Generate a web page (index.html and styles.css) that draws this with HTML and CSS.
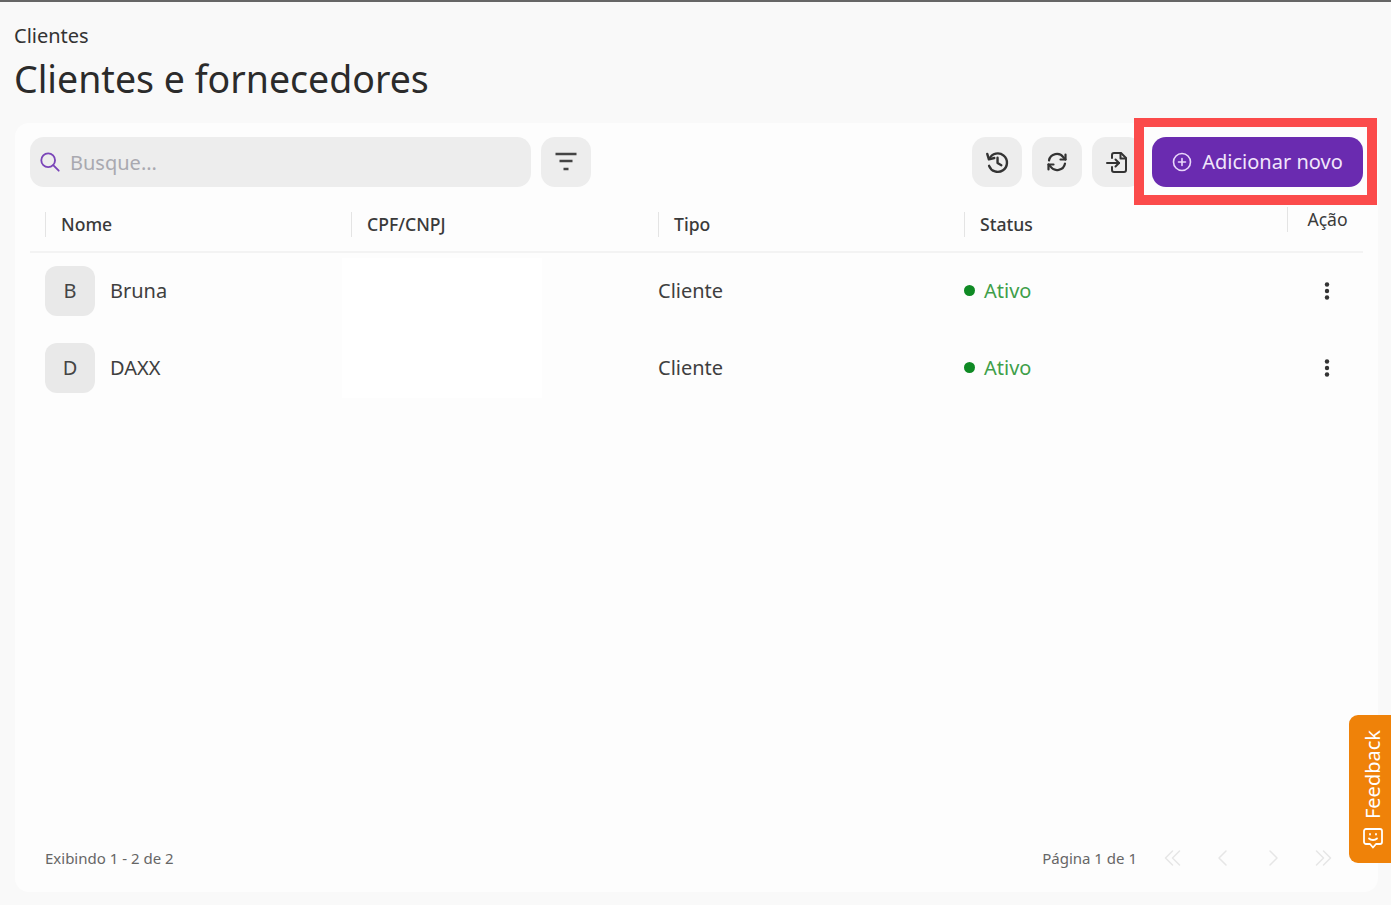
FILE: index.html
```html
<!DOCTYPE html>
<html lang="pt-BR">
<head>
<meta charset="utf-8">
<title>Clientes e fornecedores</title>
<link rel="stylesheet" href="styles.css">
</head>
<body>
<main class="page">
  <div class="crumb">Clientes</div>
  <h1 class="title">Clientes e fornecedores</h1>
  <section class="card">
    <div class="toolbar">
      <label class="search">
        <svg class="search-icon" viewBox="0 0 24 24" width="22" height="22" fill="none" stroke="#7a45b8" stroke-width="2" stroke-linecap="round"><circle cx="10" cy="10" r="7.500"/><path d="M15.500 15.500l6 6"/></svg>
        <span class="placeholder">Busque...</span>
      </label>
      <button class="icon-btn" aria-label="Filtrar">
        <svg viewBox="0 0 24 24" width="24" height="24" fill="none" stroke="#444" stroke-width="2.400"><path d="M1.500 4h21M5.500 11h13M9.500 19h5"/></svg>
      </button>
      <div class="spacer"></div>
      <button class="icon-btn" aria-label="Histórico">
        <svg viewBox="0 0 24 24" width="26" height="26" fill="none" stroke="#333" stroke-width="2.200" stroke-linecap="round" stroke-linejoin="round"><path d="M3 4.500l1.500 5 5-1.200"/><path d="M5 9a8.500 8.500 0 1 1-.3 6.500"/><path d="M12.500 8v5l3.500 2"/></svg>
      </button>
      <button class="icon-btn" aria-label="Atualizar">
        <svg viewBox="0 0 24 24" width="24" height="24" fill="none" stroke="#333" stroke-width="2.200" stroke-linecap="round" stroke-linejoin="round"><path d="M4 10.500A8 8 0 0 1 18.500 7.500L20.500 9.500"/><path d="M20.500 4.500v5h-5"/><path d="M20 13.500A8 8 0 0 1 5.500 16.500L3.500 14.500"/><path d="M3.500 19.500v-5h5"/></svg>
      </button>
      <button class="icon-btn" aria-label="Importar">
        <svg viewBox="0 0 24 24" width="24" height="24" fill="none" stroke="#333" stroke-width="2" stroke-linecap="round" stroke-linejoin="round"><path d="M7 8V5a2 2 0 0 1 2-2h7l5 5v12a2 2 0 0 1-2 2H9a2 2 0 0 1-2-2v-3"/><path d="M15.500 3v5.500H21"/><path d="M2 13h12"/><path d="M10.500 9.500L14 13l-3.500 3.500"/></svg>
      </button>
      <button class="primary">
        <svg viewBox="0 0 20 20" width="20" height="20" fill="none" stroke="#e9d8fa" stroke-width="1.600" stroke-linecap="round"><circle cx="10" cy="10" r="8.500"/><path d="M10 6.500v7M6.500 10h7"/></svg>
        <span class="primary-label">Adicionar novo</span>
      </button>
    </div>

    <div class="table">
      <div class="head">
        <div class="th">Nome</div>
        <div class="th">CPF/CNPJ</div>
        <div class="th">Tipo</div>
        <div class="th">Status</div>
        <div class="th th-action">Ação</div>
      </div>
      <div class="row">
        <div class="cell name"><span class="avatar">B</span>Bruna</div>
        <div class="cell"></div>
        <div class="cell">Cliente</div>
        <div class="cell status"><i class="dot"></i>Ativo</div>
        <div class="cell action"><svg viewBox="0 0 6 20" width="6" height="20" fill="#333"><circle cx="3" cy="3.500" r="2.200"/><circle cx="3" cy="10" r="2.200"/><circle cx="3" cy="16.500" r="2.200"/></svg></div>
      </div>
      <div class="row">
        <div class="cell name"><span class="avatar">D</span>DAXX</div>
        <div class="cell"></div>
        <div class="cell">Cliente</div>
        <div class="cell status"><i class="dot"></i>Ativo</div>
        <div class="cell action"><svg viewBox="0 0 6 20" width="6" height="20" fill="#333"><circle cx="3" cy="3.500" r="2.200"/><circle cx="3" cy="10" r="2.200"/><circle cx="3" cy="16.500" r="2.200"/></svg></div>
      </div>
      <div class="redaction"></div>
    </div>

    <footer class="foot">
      <span>Exibindo 1 - 2 de 2</span>
      <div class="pager">
        <span class="page-label">Página 1 de 1</span>
        <svg viewBox="0 0 20 20" width="20" height="20"><path d="M9.500 3L2.500 10l7 7M16.500 3l-7 7 7 7"/></svg>
        <svg viewBox="0 0 20 20" width="20" height="20"><path d="M13 3l-7 7 7 7"/></svg>
        <svg viewBox="0 0 20 20" width="20" height="20"><path d="M7 3l7 7-7 7"/></svg>
        <svg viewBox="0 0 20 20" width="20" height="20"><path d="M3.500 3l7 7-7 7M10.500 3l7 7-7 7"/></svg>
      </div>
    </footer>
  </section>
</main>

<div class="highlight"></div>

<aside class="feedback">
  <span class="feedback-text">Feedback</span>
  <svg viewBox="0 0 24 24" width="24" height="24" fill="none" stroke="#fff" stroke-width="1.800" stroke-linecap="round" stroke-linejoin="round"><path d="M5 3h14a2 2 0 0 1 2 2v11a2 2 0 0 1-2 2h-4l-3 3.500L9 18H5a2 2 0 0 1-2-2V5a2 2 0 0 1 2-2z"/><path d="M8 12.500c2 2 6 2 8 0"/><path d="M9 8v.5M15 8v.5"/></svg>
</aside>
</body>
</html>
```

FILE: styles.css
```css
* { box-sizing: border-box; }
html, body { margin: 0; height: 100%; }
body {
  background: #f9f9f9;
  border-top: 2px solid #666;
  font-family: "Noto Sans", "Open Sans", sans-serif;
  color: #2f2f2f;
  overflow: hidden;
}
.page {
  display: flex;
  flex-direction: column;
  height: 903px;
  padding: 20px 13px 13px 14px;
}
.crumb { font-size: 20px; line-height: 28px; color: #333; }
.title {
  margin: 4px 0 0;
  font-size: 37.5px;
  line-height: 50px;
  font-weight: 400;
  color: #2b2b2b;
}
.card {
  flex: 1;
  display: flex;
  flex-direction: column;
  margin-top: 19px;
  margin-left: 1px;
  padding: 14px 15px 0;
  background: #fdfdfd;
  border-radius: 14px;
}
.toolbar { display: flex; align-items: center; gap: 10px; height: 50px; }
.search {
  display: flex;
  align-items: center;
  gap: 9px;
  width: 501px;
  height: 50px;
  padding-left: 9px;
  background: #ededed;
  border-radius: 14px;
}
.placeholder { font-size: 20px; color: #a9a9b0; }
.icon-btn {
  display: flex;
  align-items: center;
  justify-content: center;
  width: 50px;
  height: 50px;
  padding: 0;
  border: 0;
  background: #ededed;
  border-radius: 14px;
}
.spacer { flex: 1; }
.primary {
  display: flex;
  align-items: center;
  justify-content: center;
  gap: 10px;
  width: 211px;
  height: 50px;
  padding: 0;
  border: 0;
  background: #6a2bb0;
  border-radius: 14px;
  color: #f1e6fb;
  font: 400 20px "Noto Sans", sans-serif;
}
.primary-label { padding-bottom: 2px; }
.table { position: relative; }
.head, .row {
  display: grid;
  grid-template-columns: 306px 307px 306px 323px 76px;
  padding-left: 15px;
}
.head {
  height: 66px;
  margin-bottom: -1px;
  align-items: center;
  padding-top: 11px;
  border-bottom: 2px solid #f3f3f3;
}
.th {
  height: 25px;
  padding-left: 15px;
  border-left: 1px solid #e4e4e4;
  font-size: 17.6px;
  line-height: 25px;
  font-weight: 500;
  color: #3a3a3a;
}
.th-action {
  margin-top: -10px;
  padding-left: 4px;
  text-align: center;
  font-weight: 400;
}
.row { height: 77px; align-items: center; font-size: 20px; color: #3f3f3f; }
.cell { display: flex; align-items: center; }
.name { gap: 15px; }
.avatar {
  display: flex;
  align-items: center;
  justify-content: center;
  width: 50px;
  height: 50px;
  background: #e9e9e9;
  border-radius: 12px;
  font-size: 20px;
  color: #444;
}
.status { gap: 9px; color: #3f9f4a; }
.dot { width: 11px; height: 11px; border-radius: 50%; background: #0f8a24; }
.action { justify-content: center; padding-left: 4px; }
.redaction {
  position: absolute;
  left: 312px;
  top: 71px;
  width: 200px;
  height: 140px;
  background: #fff;
}
.foot {
  display: flex;
  align-items: center;
  justify-content: space-between;
  margin-top: auto;
  height: 68px;
  padding: 0 30px 0 15px;
  font-size: 15px;
  color: #666;
}
.pager { display: flex; align-items: center; gap: 30px; }
.pager svg { fill: none; stroke: #e6e6e6; stroke-width: 1.500; stroke-linecap: round; stroke-linejoin: round; }
.page-label { margin-right: -4px; }
.highlight {
  position: absolute;
  left: 1134px;
  top: 118px;
  width: 243px;
  height: 87px;
  border-style: solid;
  border-color: #fb4b4b;
  border-width: 9px 10px 10px;
  pointer-events: none;
}
.feedback {
  position: absolute;
  left: 1349px;
  top: 715px;
  width: 42px;
  height: 148px;
  display: flex;
  flex-direction: column;
  align-items: center;
  gap: 7px;
  padding: 15px 0 0 6px;
  background: #ef8209;
  border-radius: 9px 0 0 9px;
  color: #fff;
}
.feedback-text {
  writing-mode: vertical-rl;
  transform: rotate(180deg);
  font-size: 20px;
  line-height: 24px;
}
```
